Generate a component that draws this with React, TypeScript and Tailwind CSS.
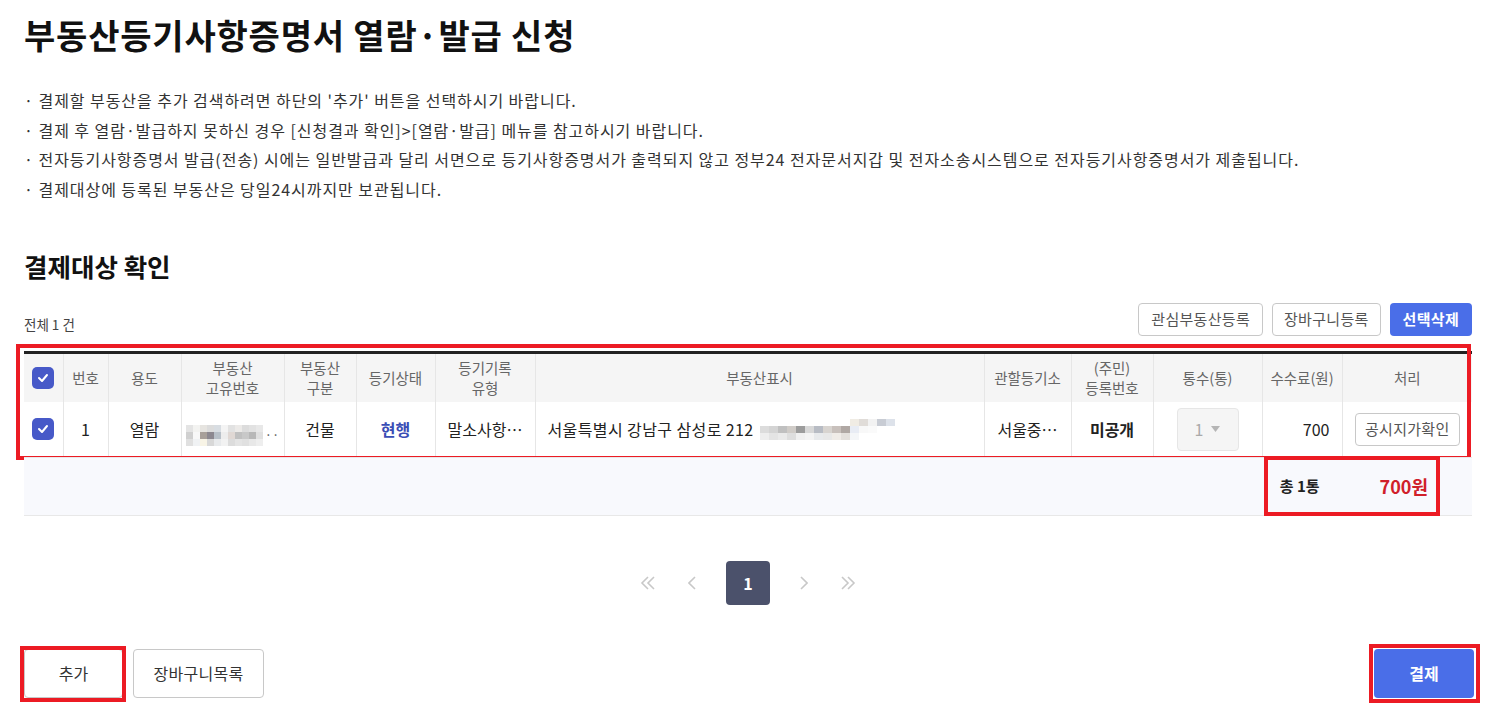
import React from "react";

const font = { fontFamily: '"Noto Sans CJK KR", "Noto Sans", sans-serif' };

function Check() {
  return (
    <span className="inline-flex h-[22px] w-[22px] items-center justify-center rounded-[5px] bg-[#4759c8]">
      <svg width="12" height="10" viewBox="0 0 12 10" fill="none">
        <path d="M2 5l3 3 5-6" stroke="white" strokeWidth="2" strokeLinecap="round" strokeLinejoin="round" />
      </svg>
    </span>
  );
}

function Blur({ cells, w }: { cells: string[][]; w: number }) {
  return (
    <span className="inline-flex flex-col align-middle">
      {cells.map((row, i) => (
        <span key={i} className="flex">
          {row.map((c, j) => (
            <span key={j} className="h-[7px]" style={{ background: c, width: w }} />
          ))}
        </span>
      ))}
    </span>
  );
}

const blurA = [
  ["#e4e4e4", "#f3f3f1", "#e6e4e0", "#dcdcdc", "#d8dde2", "#f4f4f4", "#e2e2e2", "#eceae8", "#dcdcdc", "#e2e2e2", "#e8e8e8"],
  ["#d0d0d0", "#f8f8f8", "#a8a09a", "#8c8890", "#b8c0c8", "#ededed", "#e0d8d4", "#c0c0c0", "#c8c8c8", "#b8b8b8", "#e0e0e0"],
  ["#e0e0e0", "#f0f2f4", "#f8f4e6", "#d8d8d8", "#e8eaec", "#f2f2f2", "#dcdcdc", "#e4e4e4", "#e0e0e0", "#e8e8e8", "#eeeeee"],
];
const blurB = [
  ["#fff", "#fff", "#fff", "#fff", "#fff", "#fff", "#fff", "#fff", "#fff", "#fff", "#f0ece4", "#e0dcd8", "#f2f2f2", "#c8ccd4", "#dde2ea"],
  ["#dcdcdc", "#d4d4d4", "#c0c0c0", "#d0ccc8", "#9c9c9c", "#d8d8d8", "#b8bcc4", "#d8d4d0", "#c8c0bc", "#b0a8a4", "#e8ecf4", "#f8f8f8", "#fafafa", "#fff", "#fff"],
  ["#eeeeee", "#e4e4e4", "#eaeaea", "#dedede", "#f0f0f0", "#f4f4f4", "#e8eaec", "#e8e8e8", "#f0ece8", "#e4e0dc", "#f4f6f8", "#fff", "#fff", "#fff", "#fff"],
];

function Red({ className }: { className: string }) {
  return <div className={`pointer-events-none absolute border-[4px] border-[#ec1b24] ${className}`} />;
}

export default function App() {
  const cols = [39, 45, 73, 103, 72, 79, 100, 449, 87, 82, 109, 80, 130];
  const th = "border-l border-[#e6e6e6] text-[14.5px] font-normal leading-[20px] text-[#666] align-middle";
  const td = "border-l border-[#e6e6e6] text-[16px] text-[#222] align-middle";
  return (
    <div className="min-h-[718px] w-[1496px] bg-white px-[24px] text-[#222]" style={font}>
      <h1 className="pt-[12px] text-[34px] font-bold leading-[46px] tracking-[0.8px] text-[#111]">
        부동산등기사항증명서 열람·발급 신청
      </h1>
      <ul className="mt-[28px] text-[16px] leading-[29.5px] tracking-[0.95px] text-[#333]">
        <li>· 결제할 부동산을 추가 검색하려면 하단의 '추가' 버튼을 선택하시기 바랍니다.</li>
        <li>· 결제 후 열람·발급하지 못하신 경우 [신청결과 확인]&gt;[열람·발급] 메뉴를 참고하시기 바랍니다.</li>
        <li>· 전자등기사항증명서 발급(전송) 시에는 일반발급과 달리 서면으로 등기사항증명서가 출력되지 않고 정부24 전자문서지갑 및 전자소송시스템으로 전자등기사항증명서가 제출됩니다.</li>
        <li>· 결제대상에 등록된 부동산은 당일24시까지만 보관됩니다.</li>
      </ul>

      <h2 className="mt-[44px] text-[25.5px] font-bold leading-[36px] text-[#111]">결제대상 확인</h2>

      <div className="mt-[19px] flex items-end justify-between">
        <span className="mb-[2px] text-[13.5px] text-[#444]">전체 1 건</span>
        <div className="flex gap-[9px]">
          <button className="h-[33px] rounded-[4px] border border-[#c8c8c8] bg-white px-[12px] text-[15px] tracking-[0.3px] text-[#555]">관심부동산등록</button>
          <button className="h-[33px] rounded-[4px] border border-[#c8c8c8] bg-white px-[11px] text-[15px] tracking-[0.3px] text-[#555]">장바구니등록</button>
          <button className="h-[33px] rounded-[4px] bg-[#4a6ee8] px-[13px] text-[15px] font-bold tracking-[0.3px] text-white">선택삭제</button>
        </div>
      </div>

      <div className="relative mt-[15px]">
        <table className="w-[1448px] table-fixed border-collapse border-t-[3px] border-[#222] text-center">
          <colgroup>
            {cols.map((w, i) => (
              <col key={i} style={{ width: w }} />
            ))}
          </colgroup>
          <thead>
            <tr className="h-[49px] bg-[#f5f5f5]">
              <th className="align-middle font-normal"><div className="flex justify-center"><Check /></div></th>
              <th className={th}>번호</th>
              <th className={th}>용도</th>
              <th className={th}>부동산<br />고유번호</th>
              <th className={th}>부동산<br />구분</th>
              <th className={th}>등기상태</th>
              <th className={th}>등기기록<br />유형</th>
              <th className={th}>부동산표시</th>
              <th className={th}>관할등기소</th>
              <th className={th}>(주민)<br />등록번호</th>
              <th className={th}>통수(통)</th>
              <th className={th}>수수료(원)</th>
              <th className={th}>처리</th>
            </tr>
          </thead>
          <tbody>
            <tr className="h-[55px]">
              <td className="align-middle"><div className="flex justify-center"><Check /></div></td>
              <td className={td}>1</td>
              <td className={td}>열람</td>
              <td className={td}>
                <span className="inline-flex items-center gap-[2px]">
                  <Blur cells={blurA} w={7} />
                  <span className="text-[13px] text-[#555]">··</span>
                </span>
              </td>
              <td className={td}>건물</td>
              <td className={`${td} font-bold !text-[#3a4db5]`}>현행</td>
              <td className={td}>말소사항…</td>
              <td className={`${td} px-[12px] text-left`}>
                <span className="inline-flex items-center gap-[6px] tracking-[0.4px]">
                  <span>서울특별시 강남구 삼성로 212</span>
                  <Blur cells={blurB} w={9} />
                </span>
              </td>
              <td className={td}>서울중…</td>
              <td className={`${td} font-bold`}>미공개</td>
              <td className={td}>
                <div className="flex justify-center">
                  <div className="flex h-[43px] w-[62px] items-center justify-center gap-[8px] rounded-[4px] border border-[#e6e6e6] bg-[#f5f5f5] text-[16px] text-[#aaa]">
                    <span>1</span>
                    <svg width="9" height="6" viewBox="0 0 9 6"><path d="M0 0h9L4.5 6z" fill="#b5b5b5" /></svg>
                  </div>
                </div>
              </td>
              <td className={`${td} pr-[12px] text-right`}>700</td>
              <td className={td}>
                <button className="h-[33px] rounded-[4px] border border-[#c8c8c8] bg-white px-[9px] text-[15px] tracking-[0.3px] text-[#555]">공시지가확인</button>
              </td>
            </tr>
          </tbody>
        </table>
        <Red className="left-[-8px] top-[-7px] h-[116px] w-[1455px]" />
      </div>

      <div className="relative flex h-[59px] w-[1448px] items-center justify-end border-b border-t border-[#e8e8e8] bg-[#f8f9fd] pr-[44px]">
        <span className="mr-[60px] text-[15px] font-bold text-[#222]">총 1통</span>
        <span className="text-[18px] font-bold text-[#d0202a]">700원</span>
        <Red className="right-[32px] top-[-2px] h-[60px] w-[176px]" />
      </div>

      <div className="mt-[45px] flex items-center justify-center">
        <div className="flex items-center text-[#c4c4c4]">
          <span className="flex h-[44px] w-[44px] items-center justify-center">
            <svg width="16" height="14" viewBox="0 0 16 14" fill="none" stroke="#c8c8c8" strokeWidth="1.6"><path d="M8 1L2 7l6 6M14 1L8 7l6 6" /></svg>
          </span>
          <span className="flex h-[44px] w-[44px] items-center justify-center">
            <svg width="8" height="14" viewBox="0 0 8 14" fill="none" stroke="#c8c8c8" strokeWidth="1.6"><path d="M7 1L1 7l6 6" /></svg>
          </span>
          <span className="mx-[12px] flex h-[44px] w-[44px] items-center justify-center rounded-[4px] bg-[#4b516b] text-[16px] font-bold text-white">1</span>
          <span className="flex h-[44px] w-[44px] items-center justify-center">
            <svg width="8" height="14" viewBox="0 0 8 14" fill="none" stroke="#c8c8c8" strokeWidth="1.6"><path d="M1 1l6 6-6 6" /></svg>
          </span>
          <span className="flex h-[44px] w-[44px] items-center justify-center">
            <svg width="16" height="14" viewBox="0 0 16 14" fill="none" stroke="#c8c8c8" strokeWidth="1.6"><path d="M2 1l6 6-6 6M8 1l6 6-6 6" /></svg>
          </span>
        </div>
      </div>

      <div className="mt-[44px] flex w-[1450px] items-center justify-between">
        <div className="flex gap-[10px]">
          <div className="relative">
            <button className="h-[49px] w-[99px] rounded-[4px] border border-[#c8c8c8] bg-white text-[16px] text-[#333]">추가</button>
            <Red className="left-[-4px] top-[-3px] h-[56px] w-[106px]" />
          </div>
          <button className="h-[49px] w-[131px] rounded-[4px] border border-[#c8c8c8] bg-white text-[16px] tracking-[0.3px] text-[#333]">장바구니목록</button>
        </div>
        <div className="relative">
          <button className="h-[49px] w-[100px] rounded-[4px] bg-[#4a6ee8] text-[16px] font-bold text-white">결제</button>
          <Red className="left-[-5px] top-[-5px] h-[59px] w-[111px]" />
        </div>
      </div>
    </div>
  );
}
